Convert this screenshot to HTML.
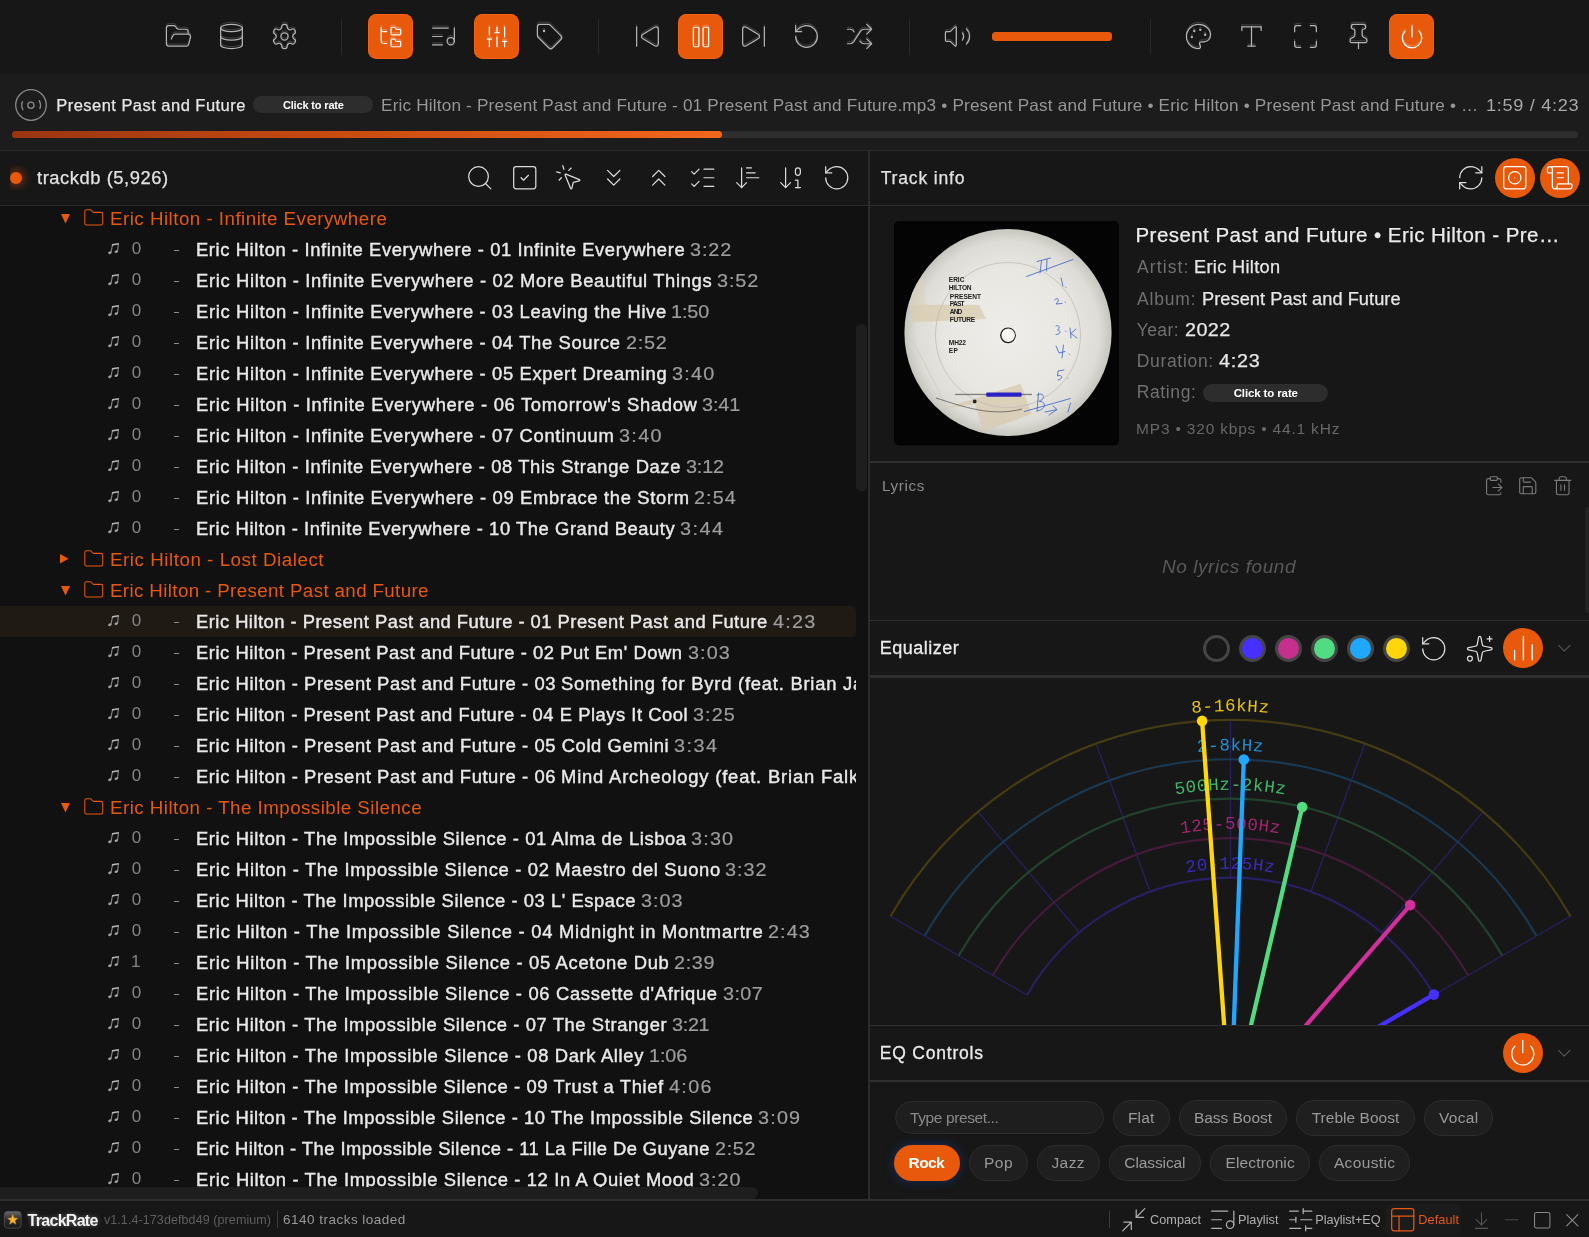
<!DOCTYPE html>
<html><head><meta charset="utf-8"><title>TrackRate</title>
<style>
html,body{margin:0;padding:0;background:#171717;}
body{width:1589px;height:1237px;position:relative;overflow:hidden;font-family:"Liberation Sans",sans-serif;}
.a,.t,.ic{position:absolute;}
.t{white-space:pre;}
.ic{display:block;overflow:visible;}
.btn{position:absolute;width:45px;height:45px;border-radius:8.5px;background:#e8590c;box-shadow:inset 0 0 0 1px rgba(255,104,20,.55);}
.sep{position:absolute;width:1px;background:#2a2a2a;}
.hl{position:absolute;background:#2b2b2b;height:1px;}
.pill{position:absolute;box-sizing:border-box;border:1px solid #2d2d2d;background:#1f1f1f;border-radius:18px;}
</style></head><body>
<div id="root" style="position:absolute;left:0;top:0;width:1589px;height:1237px;will-change:transform">
<svg width="0" height="0" style="position:absolute"><defs><filter id="gh" x="-20%" y="-20%" width="140%" height="140%"><feOffset in="SourceGraphic" dx="0" dy="-1.750" result="b"/><feComponentTransfer in="b" result="g"><feFuncA type="linear" slope=".22"/></feComponentTransfer><feMerge><feMergeNode in="g"/><feMergeNode in="SourceGraphic"/></feMerge></filter><g id="nt"><path d="M3 9.200L4.500 1.800M9.600 8.100L10.400 .6" fill="none" stroke="#878787" stroke-width="1.100"/><path d="M4 .95L10.950 0L10.750 1.600L3.800 2.700Z" fill="#b4b4b4"/><ellipse cx="1.900" cy="9.700" rx="1.850" ry="1.300" transform="rotate(-20 1.900 9.700)" fill="#a2a2a2"/><ellipse cx="8.300" cy="8.600" rx="1.850" ry="1.300" transform="rotate(-20 8.300 8.600)" fill="#a2a2a2"/></g></defs></svg>

<div class="a" style="left:0;top:0;width:1589px;height:74px;background:#171717"></div>
<svg class="ic" style="left:164.00px;top:22.30px;color:#b4b4b4" width="29" height="29" viewBox="0 0 24 24" fill="none" stroke="currentColor" stroke-width="1.0" stroke-linecap="round" stroke-linejoin="round" filter="url(#gh)"><path d="m6 14 1.5-2.9A2 2 0 0 1 9.24 10H20a2 2 0 0 1 1.94 2.5l-1.54 6a2 2 0 0 1-1.95 1.5H4a2 2 0 0 1-2-2V5a2 2 0 0 1 2-2h3.9a2 2 0 0 1 1.69.9l.81 1.2a2 2 0 0 0 1.67.9H18a2 2 0 0 1 2 2v2"/></svg>
<svg class="ic" style="left:217.00px;top:22.30px;color:#b4b4b4" width="29" height="29" viewBox="0 0 24 24" fill="none" stroke="currentColor" stroke-width="1.0" stroke-linecap="round" stroke-linejoin="round" filter="url(#gh)"><ellipse cx="12" cy="5" rx="9" ry="3"/><path d="M3 5V19A9 3 0 0 0 21 19V5"/><path d="M3 12A9 3 0 0 0 21 12"/></svg>
<svg class="ic" style="left:270.00px;top:22.30px;color:#b4b4b4" width="29" height="29" viewBox="0 0 24 24" fill="none" stroke="currentColor" stroke-width="1.0" stroke-linecap="round" stroke-linejoin="round" filter="url(#gh)"><path d="M12.22 2h-.44a2 2 0 0 0-2 2v.18a2 2 0 0 1-1 1.73l-.43.25a2 2 0 0 1-2 0l-.15-.08a2 2 0 0 0-2.73.73l-.22.38a2 2 0 0 0 .73 2.73l.15.1a2 2 0 0 1 1 1.72v.51a2 2 0 0 1-1 1.74l-.15.09a2 2 0 0 0-.73 2.73l.22.38a2 2 0 0 0 2.73.73l.15-.08a2 2 0 0 1 2 0l.43.25a2 2 0 0 1 1 1.73V20a2 2 0 0 0 2 2h.44a2 2 0 0 0 2-2v-.18a2 2 0 0 1 1-1.73l.43-.25a2 2 0 0 1 2 0l.15.08a2 2 0 0 0 2.73-.73l.22-.39a2 2 0 0 0-.73-2.73l-.15-.08a2 2 0 0 1-1-1.74v-.5a2 2 0 0 1 1-1.74l.15-.09a2 2 0 0 0 .73-2.73l-.22-.38a2 2 0 0 0-2.73-.73l-.15.08a2 2 0 0 1-2 0l-.43-.25a2 2 0 0 1-1-1.73V4a2 2 0 0 0-2-2z"/><circle cx="12" cy="12" r="3"/></svg>
<div class="btn" style="left:368px;top:14px"></div><svg class="ic" style="left:377.50px;top:23.80px;color:#ffffff" width="26" height="26" viewBox="0 0 24 24" fill="none" stroke="currentColor" stroke-width="1.15" stroke-linecap="round" stroke-linejoin="round" filter="url(#gh)"><path d="M20 10a1 1 0 0 0 1-1V6a1 1 0 0 0-1-1h-2.5a1 1 0 0 1-.8-.4l-.9-1.2A1 1 0 0 0 15 3h-2a1 1 0 0 0-1 1v5a1 1 0 0 0 1 1Z"/><path d="M20 21a1 1 0 0 0 1-1v-3a1 1 0 0 0-1-1h-2.9a1 1 0 0 1-.88-.55l-.42-.85a1 1 0 0 0-.92-.6H13a1 1 0 0 0-1 1v5a1 1 0 0 0 1 1Z"/><path d="M3 5a2 2 0 0 0 2 2h3"/><path d="M3 3v13a2 2 0 0 0 2 2h3"/></svg>
<svg class="ic" style="left:429.00px;top:22.30px;color:#b4b4b4" width="29" height="29" viewBox="0 0 24 24" fill="none" stroke="currentColor" stroke-width="1.0" stroke-linecap="round" stroke-linejoin="round" filter="url(#gh)"><path d="M16 5H3"/><path d="M11 12H3"/><path d="M11 19H3"/><path d="M21 16V5"/><circle cx="18" cy="16" r="3"/></svg>
<div class="btn" style="left:474px;top:14px"></div><svg class="ic" style="left:483.50px;top:23.80px;color:#ffffff" width="26" height="26" viewBox="0 0 24 24" fill="none" stroke="currentColor" stroke-width="1.15" stroke-linecap="round" stroke-linejoin="round" filter="url(#gh)"><path d="M10 8h4"/><path d="M12 21v-9"/><path d="M12 8V3"/><path d="M17 16h4"/><path d="M19 12V3"/><path d="M19 21v-5"/><path d="M3 14h4"/><path d="M5 10V3"/><path d="M5 21v-7"/></svg>
<svg class="ic" style="left:535.00px;top:22.30px;color:#b4b4b4" width="29" height="29" viewBox="0 0 24 24" fill="none" stroke="currentColor" stroke-width="1.0" stroke-linecap="round" stroke-linejoin="round" filter="url(#gh)"><path d="M12.586 2.586A2 2 0 0 0 11.172 2H4a2 2 0 0 0-2 2v7.172a2 2 0 0 0 .586 1.414l8.704 8.704a2.426 2.426 0 0 0 3.42 0l6.58-6.58a2.426 2.426 0 0 0 0-3.42z"/><circle cx="7.5" cy="7.5" r=".5" fill="currentColor"/></svg>
<svg class="ic" style="left:633.00px;top:22.30px;color:#b4b4b4" width="29" height="29" viewBox="0 0 24 24" fill="none" stroke="currentColor" stroke-width="1.0" stroke-linecap="round" stroke-linejoin="round" filter="url(#gh)"><path d="M17.971 4.285A2 2 0 0 1 21 6v12a2 2 0 0 1-3.029 1.715l-9.997-5.998a2 2 0 0 1-.003-3.432z"/><path d="M3 20V4"/></svg>
<div class="btn" style="left:678px;top:14px"></div><svg class="ic" style="left:687.50px;top:23.80px;color:#ffffff" width="26" height="26" viewBox="0 0 24 24" fill="none" stroke="currentColor" stroke-width="1.15" stroke-linecap="round" stroke-linejoin="round" filter="url(#gh)"><rect x="14" y="3" width="5" height="18" rx="1"/><rect x="5" y="3" width="5" height="18" rx="1"/></svg>
<svg class="ic" style="left:739.00px;top:22.30px;color:#b4b4b4" width="29" height="29" viewBox="0 0 24 24" fill="none" stroke="currentColor" stroke-width="1.0" stroke-linecap="round" stroke-linejoin="round" filter="url(#gh)"><path d="M21 4v16"/><path d="M6.029 4.285A2 2 0 0 0 3 6v12a2 2 0 0 0 3.029 1.715l9.997-5.998a2 2 0 0 0 .003-3.432z"/></svg>
<svg class="ic" style="left:792.00px;top:22.30px;color:#b4b4b4" width="29" height="29" viewBox="0 0 24 24" fill="none" stroke="currentColor" stroke-width="1.0" stroke-linecap="round" stroke-linejoin="round" filter="url(#gh)"><path d="M3 12a9 9 0 1 0 9-9 9.75 9.75 0 0 0-6.74 2.74L3 8"/><path d="M3 3v5h5"/></svg>
<svg class="ic" style="left:845.00px;top:22.30px;color:#b4b4b4" width="29" height="29" viewBox="0 0 24 24" fill="none" stroke="currentColor" stroke-width="1.0" stroke-linecap="round" stroke-linejoin="round" filter="url(#gh)"><path d="m18 14 4 4-4 4"/><path d="m18 2 4 4-4 4"/><path d="M2 18h1.973a4 4 0 0 0 3.3-1.7l5.454-8.6a4 4 0 0 1 3.3-1.7H22"/><path d="M2 6h1.972a4 4 0 0 1 3.6 2.2"/><path d="M22 18h-6.041a4 4 0 0 1-3.3-1.8l-.359-.45"/></svg>
<svg class="ic" style="left:943.00px;top:22.30px;color:#b4b4b4" width="29" height="29" viewBox="0 0 24 24" fill="none" stroke="currentColor" stroke-width="1.0" stroke-linecap="round" stroke-linejoin="round" filter="url(#gh)"><path d="M11 4.702a.705.705 0 0 0-1.203-.498L6.413 7.587A1.4 1.4 0 0 1 5.416 8H3a1 1 0 0 0-1 1v6a1 1 0 0 0 1 1h2.416a1.400 1.400 0 0 1 .997.413l3.383 3.384A.705.705 0 0 0 11 19.298z"/><path d="M16 9a5 5 0 0 1 0 6"/><path d="M19.364 18.364a9 9 0 0 0 0-12.728"/></svg>
<svg class="ic" style="left:1184.00px;top:22.30px;color:#b4b4b4" width="29" height="29" viewBox="0 0 24 24" fill="none" stroke="currentColor" stroke-width="1.0" stroke-linecap="round" stroke-linejoin="round" filter="url(#gh)"><circle cx="13.500" cy="6.500" r=".5" fill="currentColor"/><circle cx="17.500" cy="10.500" r=".5" fill="currentColor"/><circle cx="8.500" cy="7.500" r=".5" fill="currentColor"/><circle cx="6.500" cy="12.500" r=".5" fill="currentColor"/><path d="M12 2C6.500 2 2 6.500 2 12s4.500 10 10 10c.926 0 1.648-.746 1.648-1.688 0-.437-.18-.835-.437-1.125-.29-.289-.438-.652-.438-1.125a1.640 1.640 0 0 1 1.668-1.668h1.996c3.051 0 5.555-2.503 5.555-5.554C21.965 6.012 17.461 2 12 2z"/></svg>
<svg class="ic" style="left:1237.00px;top:22.30px;color:#b4b4b4" width="29" height="29" viewBox="0 0 24 24" fill="none" stroke="currentColor" stroke-width="1.0" stroke-linecap="round" stroke-linejoin="round" filter="url(#gh)"><polyline points="4 7 4 4 20 4 20 7"/><line x1="9" x2="15" y1="20" y2="20"/><line x1="12" x2="12" y1="4" y2="20"/></svg>
<svg class="ic" style="left:1291.00px;top:22.30px;color:#b4b4b4" width="29" height="29" viewBox="0 0 24 24" fill="none" stroke="currentColor" stroke-width="1.0" stroke-linecap="round" stroke-linejoin="round" filter="url(#gh)"><path d="M8 3H5a2 2 0 0 0-2 2v3"/><path d="M21 8V5a2 2 0 0 0-2-2h-3"/><path d="M3 16v3a2 2 0 0 0 2 2h3"/><path d="M16 21h3a2 2 0 0 0 2-2v-3"/></svg>
<svg class="ic" style="left:1343.50px;top:22.30px;color:#b4b4b4" width="29" height="29" viewBox="0 0 24 24" fill="none" stroke="currentColor" stroke-width="1.0" stroke-linecap="round" stroke-linejoin="round" filter="url(#gh)"><path d="M12 17v5"/><path d="M9 10.760a2 2 0 0 1-1.110 1.790l-1.780.9A2 2 0 0 0 5 15.240V16a1 1 0 0 0 1 1h12a1 1 0 0 0 1-1v-.76a2 2 0 0 0-1.110-1.790l-1.780-.9A2 2 0 0 1 15 10.760V7a1 1 0 0 1 1-1 2 2 0 0 0 0-4H8a2 2 0 0 0 0 4 1 1 0 0 1 1 1z"/></svg>
<div class="btn" style="left:1389px;top:14px"></div><svg class="ic" style="left:1398.50px;top:23.80px;color:#ffffff" width="26" height="26" viewBox="0 0 24 24" fill="none" stroke="currentColor" stroke-width="1.15" stroke-linecap="round" stroke-linejoin="round" filter="url(#gh)"><path d="M12 2v10"/><path d="M18.400 6.600a9 9 0 1 1-12.770.04"/></svg>
<div class="sep" style="left:341px;top:19px;height:36px"></div>
<div class="sep" style="left:598px;top:19px;height:36px"></div>
<div class="sep" style="left:909px;top:19px;height:36px"></div>
<div class="sep" style="left:1150px;top:19px;height:36px"></div>
<div class="a" style="left:992px;top:32px;width:120px;height:9px;border-radius:3.5px;background:#e8590c"></div>
<div class="a" style="left:0;top:74px;width:1589px;height:76px;background:#1c1c1c"></div>
<div class="hl" style="left:0;top:150px;width:1589px"></div>
<svg class="ic" style="left:10.7px;top:85px" width="40" height="40" viewBox="0 0 40 40" fill="none" stroke="#8a8a8a" stroke-width="1.3" stroke-linecap="round">
<circle cx="20" cy="20" r="15.300"/><circle cx="19.900" cy="20.200" r="3.100"/>
<path d="M11.900 24.700A9.400 9.400 0 0 1 11.400 16.600"/><path d="M28.300 15.600A9.400 9.400 0 0 1 28.900 23.500"/></svg>
<div class="t" style="left:56.20px;top:94.68px;font-size:16.5px;line-height:21px;color:#e6e6e6;letter-spacing:0.470px;-webkit-text-stroke:0.25px #e6e6e6;">Present Past and Future</div>
<div class="a" style="left:253px;top:96px;width:120px;height:17px;border-radius:9px;background:#2d2d2d"></div>
<div class="t" style="left:282.90px;top:97.79px;font-size:11px;line-height:14px;color:#ffffff;letter-spacing:-0.156px;font-weight:700;">Click to rate</div>
<div class="t" style="left:380.80px;top:94.68px;font-size:16.5px;line-height:21px;color:#979797;letter-spacing:0.173px;transform:scaleX(1.04);transform-origin:0 0;">Eric Hilton - Present Past and Future - 01 Present Past and Future.mp3 • Present Past and Future • Eric Hilton • Present Past and Future • …</div>
<div class="t" style="left:1486.30px;top:94.68px;font-size:16.5px;line-height:21px;color:#a8a8a8;letter-spacing:0.629px;transform:scaleX(1.1);transform-origin:0 0;">1:59 / 4:23</div>
<div class="a" style="left:12px;top:131px;width:1566px;height:7px;border-radius:3.5px;background:#2e2e2e"></div>
<div class="a" style="left:12px;top:131px;width:709.5px;height:7px;border-radius:3.5px;background:linear-gradient(90deg,#9a3512 0%,#c84a10 45%,#f2671c 100%)"></div>
<div class="a" style="left:0;top:151px;width:869px;height:54px;background:#171717"></div>
<div class="hl" style="left:0;top:205px;width:869px"></div>
<div class="a" style="left:0;top:206px;width:869px;height:994px;background:#111111"></div>
<div class="a" style="left:10px;top:166px;width:24px;height:24px;overflow:hidden"><div class="a" style="left:0;top:6px;width:12px;height:12px;border-radius:6px;background:#e8590c;box-shadow:0 0 9px 3px rgba(232,89,12,.38)"></div></div>
<div class="t" style="left:37.30px;top:167.14px;font-size:17.5px;line-height:23px;color:#e2e2e2;letter-spacing:0.511px;transform:scaleX(1.05);transform-origin:0 0;-webkit-text-stroke:0.25px #e2e2e2;">trackdb (5,926)</div>
<svg class="ic" style="left:465.25px;top:163.25px;color:#dcdcdc" width="29.5" height="29.5" viewBox="0 0 24 24" fill="none" stroke="currentColor" stroke-width="1.0" stroke-linecap="round" stroke-linejoin="round"><circle cx="11" cy="11" r="8"/><path d="m21 21-4.300-4.300"/></svg>
<svg class="ic" style="left:509.75px;top:163.25px;color:#dcdcdc" width="29.5" height="29.5" viewBox="0 0 24 24" fill="none" stroke="currentColor" stroke-width="1.0" stroke-linecap="round" stroke-linejoin="round"><rect width="18" height="18" x="3" y="3" rx="2"/><path d="m9 12 2 2 4-4"/></svg>
<svg class="ic" style="left:554.25px;top:163.25px;color:#dcdcdc" width="29.5" height="29.5" viewBox="0 0 24 24" fill="none" stroke="currentColor" stroke-width="1.0" stroke-linecap="round" stroke-linejoin="round"><path d="M14 4.100 12 6"/><path d="m5.100 8-2.900-.8"/><path d="m6 12-1.900 2"/><path d="M7.200 2.200 8 5.100"/><path d="M9.037 9.690a.498.498 0 0 1 .653-.653l11 4.500a.5.5 0 0 1-.074.949l-4.349 1.041a1 1 0 0 0-.740.739l-1.040 4.350a.5.5 0 0 1-.950.074z"/></svg>
<svg class="ic" style="left:598.75px;top:163.25px;color:#dcdcdc" width="29.5" height="29.5" viewBox="0 0 24 24" fill="none" stroke="currentColor" stroke-width="1.0" stroke-linecap="round" stroke-linejoin="round"><path d="m7 6 5 5 5-5"/><path d="m7 13 5 5 5-5"/></svg>
<svg class="ic" style="left:643.75px;top:163.25px;color:#dcdcdc" width="29.5" height="29.5" viewBox="0 0 24 24" fill="none" stroke="currentColor" stroke-width="1.0" stroke-linecap="round" stroke-linejoin="round"><path d="m17 11-5-5-5 5"/><path d="m17 18-5-5-5 5"/></svg>
<svg class="ic" style="left:688.25px;top:163.25px;color:#dcdcdc" width="29.5" height="29.5" viewBox="0 0 24 24" fill="none" stroke="currentColor" stroke-width="1.0" stroke-linecap="round" stroke-linejoin="round"><path d="M13 5h8"/><path d="M13 12h8"/><path d="M13 19h8"/><path d="m3 17 2 2 4-4"/><path d="m3 7 2 2 4-4"/></svg>
<svg class="ic" style="left:732.75px;top:163.25px;color:#dcdcdc" width="29.5" height="29.5" viewBox="0 0 24 24" fill="none" stroke="currentColor" stroke-width="1.0" stroke-linecap="round" stroke-linejoin="round"><path d="m3 16 4 4 4-4"/><path d="M7 20V4"/><path d="M11 4h4"/><path d="M11 8h7"/><path d="M11 12h10"/></svg>
<svg class="ic" style="left:777.25px;top:163.25px;color:#dcdcdc" width="29.5" height="29.5" viewBox="0 0 24 24" fill="none" stroke="currentColor" stroke-width="1.0" stroke-linecap="round" stroke-linejoin="round"><path d="m3 16 4 4 4-4"/><path d="M7 20V4"/><rect x="15" y="4" width="4" height="6" ry="2"/><path d="M17 20v-6h-2"/><path d="M15 20h4"/></svg>
<svg class="ic" style="left:821.75px;top:163.25px;color:#dcdcdc" width="29.5" height="29.5" viewBox="0 0 24 24" fill="none" stroke="currentColor" stroke-width="1.0" stroke-linecap="round" stroke-linejoin="round"><path d="M3 12a9 9 0 1 0 9-9 9.75 9.75 0 0 0-6.74 2.74L3 8"/><path d="M3 3v5h5"/></svg>
<div class="a" style="left:0;top:206px;width:856px;height:981px;overflow:hidden">
<div class="a" style="left:-8px;top:400.29999999999995px;width:864px;height:30.7px;border-radius:5.5px;background:#201a15"></div>
<svg class="ic" style="left:61.2px;top:7.70px" width="9" height="9.4" viewBox="0 0 9 9.4"><path d="M0 0H9L4.500 9.400Z" fill="#e8590c"/></svg>
<svg class="ic" style="left:82.75px;top:1.35px;color:#e8590c" width="21.5" height="21.5" viewBox="0 0 24 24" fill="none" stroke="currentColor" stroke-width="1.15" stroke-linecap="round" stroke-linejoin="round"><path d="M20 20a2 2 0 0 0 2-2V8a2 2 0 0 0-2-2h-7.900a2 2 0 0 1-1.690-.9L9.600 3.900A2 2 0 0 0 7.930 3H4a2 2 0 0 0-2 2v13a2 2 0 0 0 2 2Z"/></svg>
<div class="t" style="left:109.90px;top:1.86px;font-size:18px;line-height:23px;color:#e8590c;letter-spacing:0.471px;transform:scaleX(1.04);transform-origin:0 0;">Eric Hilton - Infinite Everywhere</div>
<svg class="ic" style="left:108.1px;top:36.80px" width="11.5" height="11.5" viewBox="0 0 11.5 11.5"><use href="#nt"/></svg>
<div class="t" style="left:131.80px;top:32.01px;font-size:17px;line-height:22px;color:#858585;letter-spacing:0.000px;">0</div>
<div class="a" style="left:173.9px;top:44.20px;width:5.2px;height:1.1px;background:#8a8a8a"></div>
<div class="t" style="left:195.90px;top:33.04px;font-size:17.5px;line-height:23px;color:#e9e9e9;letter-spacing:0.571px;transform:scaleX(1.05);transform-origin:0 0;-webkit-text-stroke:0.4px #e9e9e9;">Eric Hilton - Infinite Everywhere - 01 Infinite Everywhere</div>
<div class="t" style="left:689.80px;top:33.04px;font-size:17.5px;line-height:23px;color:#9d9d9d;letter-spacing:0.799px;transform:scaleX(1.13);transform-origin:0 0;-webkit-text-stroke:0.2px #9d9d9d;">3:22</div>
<svg class="ic" style="left:108.1px;top:67.80px" width="11.5" height="11.5" viewBox="0 0 11.5 11.5"><use href="#nt"/></svg>
<div class="t" style="left:131.80px;top:63.01px;font-size:17px;line-height:22px;color:#858585;letter-spacing:0.000px;">0</div>
<div class="a" style="left:173.9px;top:75.20px;width:5.2px;height:1.1px;background:#8a8a8a"></div>
<div class="t" style="left:195.90px;top:64.04px;font-size:17.5px;line-height:23px;color:#e9e9e9;letter-spacing:0.631px;transform:scaleX(1.05);transform-origin:0 0;-webkit-text-stroke:0.4px #e9e9e9;">Eric Hilton - Infinite Everywhere - 02 More Beautiful Things</div>
<div class="t" style="left:717.00px;top:64.04px;font-size:17.5px;line-height:23px;color:#9d9d9d;letter-spacing:0.829px;transform:scaleX(1.13);transform-origin:0 0;-webkit-text-stroke:0.2px #9d9d9d;">3:52</div>
<svg class="ic" style="left:108.1px;top:98.80px" width="11.5" height="11.5" viewBox="0 0 11.5 11.5"><use href="#nt"/></svg>
<div class="t" style="left:131.80px;top:94.01px;font-size:17px;line-height:22px;color:#858585;letter-spacing:0.000px;">0</div>
<div class="a" style="left:173.9px;top:106.20px;width:5.2px;height:1.1px;background:#8a8a8a"></div>
<div class="t" style="left:195.90px;top:95.04px;font-size:17.5px;line-height:23px;color:#e9e9e9;letter-spacing:0.619px;transform:scaleX(1.05);transform-origin:0 0;-webkit-text-stroke:0.4px #e9e9e9;">Eric Hilton - Infinite Everywhere - 03 Leaving the Hive</div>
<div class="t" style="left:671.00px;top:95.04px;font-size:17.5px;line-height:23px;color:#9d9d9d;letter-spacing:-0.086px;transform:scaleX(1.13);transform-origin:0 0;-webkit-text-stroke:0.2px #9d9d9d;">1:50</div>
<svg class="ic" style="left:108.1px;top:129.80px" width="11.5" height="11.5" viewBox="0 0 11.5 11.5"><use href="#nt"/></svg>
<div class="t" style="left:131.80px;top:125.01px;font-size:17px;line-height:22px;color:#858585;letter-spacing:0.000px;">0</div>
<div class="a" style="left:173.9px;top:137.20px;width:5.2px;height:1.1px;background:#8a8a8a"></div>
<div class="t" style="left:195.90px;top:126.04px;font-size:17.5px;line-height:23px;color:#e9e9e9;letter-spacing:0.618px;transform:scaleX(1.05);transform-origin:0 0;-webkit-text-stroke:0.4px #e9e9e9;">Eric Hilton - Infinite Everywhere - 04 The Source</div>
<div class="t" style="left:625.50px;top:126.04px;font-size:17.5px;line-height:23px;color:#9d9d9d;letter-spacing:0.652px;transform:scaleX(1.13);transform-origin:0 0;-webkit-text-stroke:0.2px #9d9d9d;">2:52</div>
<svg class="ic" style="left:108.1px;top:160.80px" width="11.5" height="11.5" viewBox="0 0 11.5 11.5"><use href="#nt"/></svg>
<div class="t" style="left:131.80px;top:156.01px;font-size:17px;line-height:22px;color:#858585;letter-spacing:0.000px;">0</div>
<div class="a" style="left:173.9px;top:168.20px;width:5.2px;height:1.1px;background:#8a8a8a"></div>
<div class="t" style="left:195.90px;top:157.04px;font-size:17.5px;line-height:23px;color:#e9e9e9;letter-spacing:0.621px;transform:scaleX(1.05);transform-origin:0 0;-webkit-text-stroke:0.4px #e9e9e9;">Eric Hilton - Infinite Everywhere - 05 Expert Dreaming</div>
<div class="t" style="left:672.00px;top:157.04px;font-size:17.5px;line-height:23px;color:#9d9d9d;letter-spacing:1.124px;transform:scaleX(1.13);transform-origin:0 0;-webkit-text-stroke:0.2px #9d9d9d;">3:40</div>
<svg class="ic" style="left:108.1px;top:191.80px" width="11.5" height="11.5" viewBox="0 0 11.5 11.5"><use href="#nt"/></svg>
<div class="t" style="left:131.80px;top:187.01px;font-size:17px;line-height:22px;color:#858585;letter-spacing:0.000px;">0</div>
<div class="a" style="left:173.9px;top:199.20px;width:5.2px;height:1.1px;background:#8a8a8a"></div>
<div class="t" style="left:195.90px;top:188.04px;font-size:17.5px;line-height:23px;color:#e9e9e9;letter-spacing:0.661px;transform:scaleX(1.05);transform-origin:0 0;-webkit-text-stroke:0.4px #e9e9e9;">Eric Hilton - Infinite Everywhere - 06 Tomorrow's Shadow</div>
<div class="t" style="left:702.30px;top:188.04px;font-size:17.5px;line-height:23px;color:#9d9d9d;letter-spacing:-0.086px;transform:scaleX(1.13);transform-origin:0 0;-webkit-text-stroke:0.2px #9d9d9d;">3:41</div>
<svg class="ic" style="left:108.1px;top:222.80px" width="11.5" height="11.5" viewBox="0 0 11.5 11.5"><use href="#nt"/></svg>
<div class="t" style="left:131.80px;top:218.01px;font-size:17px;line-height:22px;color:#858585;letter-spacing:0.000px;">0</div>
<div class="a" style="left:173.9px;top:230.20px;width:5.2px;height:1.1px;background:#8a8a8a"></div>
<div class="t" style="left:195.90px;top:219.04px;font-size:17.5px;line-height:23px;color:#e9e9e9;letter-spacing:0.621px;transform:scaleX(1.05);transform-origin:0 0;-webkit-text-stroke:0.4px #e9e9e9;">Eric Hilton - Infinite Everywhere - 07 Continuum</div>
<div class="t" style="left:619.10px;top:219.04px;font-size:17.5px;line-height:23px;color:#9d9d9d;letter-spacing:1.183px;transform:scaleX(1.13);transform-origin:0 0;-webkit-text-stroke:0.2px #9d9d9d;">3:40</div>
<svg class="ic" style="left:108.1px;top:253.80px" width="11.5" height="11.5" viewBox="0 0 11.5 11.5"><use href="#nt"/></svg>
<div class="t" style="left:131.80px;top:249.01px;font-size:17px;line-height:22px;color:#858585;letter-spacing:0.000px;">0</div>
<div class="a" style="left:173.9px;top:261.20px;width:5.2px;height:1.1px;background:#8a8a8a"></div>
<div class="t" style="left:195.90px;top:250.04px;font-size:17.5px;line-height:23px;color:#e9e9e9;letter-spacing:0.595px;transform:scaleX(1.05);transform-origin:0 0;-webkit-text-stroke:0.4px #e9e9e9;">Eric Hilton - Infinite Everywhere - 08 This Strange Daze</div>
<div class="t" style="left:685.90px;top:250.04px;font-size:17.5px;line-height:23px;color:#9d9d9d;letter-spacing:-0.115px;transform:scaleX(1.13);transform-origin:0 0;-webkit-text-stroke:0.2px #9d9d9d;">3:12</div>
<svg class="ic" style="left:108.1px;top:284.80px" width="11.5" height="11.5" viewBox="0 0 11.5 11.5"><use href="#nt"/></svg>
<div class="t" style="left:131.80px;top:280.01px;font-size:17px;line-height:22px;color:#858585;letter-spacing:0.000px;">0</div>
<div class="a" style="left:173.9px;top:292.20px;width:5.2px;height:1.1px;background:#8a8a8a"></div>
<div class="t" style="left:195.90px;top:281.04px;font-size:17.5px;line-height:23px;color:#e9e9e9;letter-spacing:0.632px;transform:scaleX(1.05);transform-origin:0 0;-webkit-text-stroke:0.4px #e9e9e9;">Eric Hilton - Infinite Everywhere - 09 Embrace the Storm</div>
<div class="t" style="left:694.20px;top:281.04px;font-size:17.5px;line-height:23px;color:#9d9d9d;letter-spacing:0.947px;transform:scaleX(1.13);transform-origin:0 0;-webkit-text-stroke:0.2px #9d9d9d;">2:54</div>
<svg class="ic" style="left:108.1px;top:315.80px" width="11.5" height="11.5" viewBox="0 0 11.5 11.5"><use href="#nt"/></svg>
<div class="t" style="left:131.80px;top:311.01px;font-size:17px;line-height:22px;color:#858585;letter-spacing:0.000px;">0</div>
<div class="a" style="left:173.9px;top:323.20px;width:5.2px;height:1.1px;background:#8a8a8a"></div>
<div class="t" style="left:195.90px;top:312.04px;font-size:17.5px;line-height:23px;color:#e9e9e9;letter-spacing:0.541px;transform:scaleX(1.05);transform-origin:0 0;-webkit-text-stroke:0.4px #e9e9e9;">Eric Hilton - Infinite Everywhere - 10 The Grand Beauty</div>
<div class="t" style="left:680.30px;top:312.04px;font-size:17.5px;line-height:23px;color:#9d9d9d;letter-spacing:1.360px;transform:scaleX(1.13);transform-origin:0 0;-webkit-text-stroke:0.2px #9d9d9d;">3:44</div>
<svg class="ic" style="left:60.4px;top:348.40px" width="8.6" height="9.600" viewBox="0 0 8.600 9.600"><path d="M0 0V9.600L8.600 4.800Z" fill="#e8590c"/></svg>
<svg class="ic" style="left:82.75px;top:342.35px;color:#e8590c" width="21.5" height="21.5" viewBox="0 0 24 24" fill="none" stroke="currentColor" stroke-width="1.15" stroke-linecap="round" stroke-linejoin="round"><path d="M20 20a2 2 0 0 0 2-2V8a2 2 0 0 0-2-2h-7.900a2 2 0 0 1-1.690-.9L9.600 3.900A2 2 0 0 0 7.930 3H4a2 2 0 0 0-2 2v13a2 2 0 0 0 2 2Z"/></svg>
<div class="t" style="left:109.90px;top:342.86px;font-size:18px;line-height:23px;color:#e8590c;letter-spacing:0.529px;transform:scaleX(1.04);transform-origin:0 0;">Eric Hilton - Lost Dialect</div>
<svg class="ic" style="left:61.2px;top:379.70px" width="9" height="9.4" viewBox="0 0 9 9.4"><path d="M0 0H9L4.500 9.400Z" fill="#e8590c"/></svg>
<svg class="ic" style="left:82.75px;top:373.35px;color:#e8590c" width="21.5" height="21.5" viewBox="0 0 24 24" fill="none" stroke="currentColor" stroke-width="1.15" stroke-linecap="round" stroke-linejoin="round"><path d="M20 20a2 2 0 0 0 2-2V8a2 2 0 0 0-2-2h-7.900a2 2 0 0 1-1.690-.9L9.600 3.900A2 2 0 0 0 7.930 3H4a2 2 0 0 0-2 2v13a2 2 0 0 0 2 2Z"/></svg>
<div class="t" style="left:109.90px;top:373.86px;font-size:18px;line-height:23px;color:#e8590c;letter-spacing:0.365px;transform:scaleX(1.04);transform-origin:0 0;">Eric Hilton - Present Past and Future</div>
<svg class="ic" style="left:108.1px;top:408.80px" width="11.5" height="11.5" viewBox="0 0 11.5 11.5"><use href="#nt"/></svg>
<div class="t" style="left:131.80px;top:404.01px;font-size:17px;line-height:22px;color:#858585;letter-spacing:0.000px;">0</div>
<div class="a" style="left:173.9px;top:416.20px;width:5.2px;height:1.1px;background:#8a8a8a"></div>
<div class="t" style="left:195.90px;top:405.04px;font-size:17.5px;line-height:23px;color:#e9e9e9;letter-spacing:0.453px;transform:scaleX(1.05);transform-origin:0 0;-webkit-text-stroke:0.4px #e9e9e9;">Eric Hilton - Present Past and Future - 01 Present Past and Future</div>
<div class="t" style="left:772.50px;top:405.04px;font-size:17.5px;line-height:23px;color:#9d9d9d;letter-spacing:1.124px;transform:scaleX(1.13);transform-origin:0 0;-webkit-text-stroke:0.2px #9d9d9d;">4:23</div>
<svg class="ic" style="left:108.1px;top:439.80px" width="11.5" height="11.5" viewBox="0 0 11.5 11.5"><use href="#nt"/></svg>
<div class="t" style="left:131.80px;top:435.01px;font-size:17px;line-height:22px;color:#858585;letter-spacing:0.000px;">0</div>
<div class="a" style="left:173.9px;top:447.20px;width:5.2px;height:1.1px;background:#8a8a8a"></div>
<div class="t" style="left:195.90px;top:436.04px;font-size:17.5px;line-height:23px;color:#e9e9e9;letter-spacing:0.512px;transform:scaleX(1.05);transform-origin:0 0;-webkit-text-stroke:0.4px #e9e9e9;">Eric Hilton - Present Past and Future - 02 Put Em' Down</div>
<div class="t" style="left:687.90px;top:436.04px;font-size:17.5px;line-height:23px;color:#9d9d9d;letter-spacing:0.947px;transform:scaleX(1.13);transform-origin:0 0;-webkit-text-stroke:0.2px #9d9d9d;">3:03</div>
<svg class="ic" style="left:108.1px;top:470.80px" width="11.5" height="11.5" viewBox="0 0 11.5 11.5"><use href="#nt"/></svg>
<div class="t" style="left:131.80px;top:466.01px;font-size:17px;line-height:22px;color:#858585;letter-spacing:0.000px;">0</div>
<div class="a" style="left:173.9px;top:478.20px;width:5.2px;height:1.1px;background:#8a8a8a"></div>
<div class="t" style="left:195.90px;top:467.04px;font-size:17.5px;line-height:23px;color:#e9e9e9;letter-spacing:0.544px;transform:scaleX(1.05);transform-origin:0 0;-webkit-text-stroke:0.4px #e9e9e9;">Eric Hilton - Present Past and Future - 03</div>
<div class="t" style="left:561.10px;top:467.04px;font-size:17.5px;line-height:23px;color:#e9e9e9;letter-spacing:0.733px;transform:scaleX(1.05);transform-origin:0 0;-webkit-text-stroke:0.4px #e9e9e9;">Something for Byrd (feat. Brian Jackson)</div>
<svg class="ic" style="left:108.1px;top:501.80px" width="11.5" height="11.5" viewBox="0 0 11.5 11.5"><use href="#nt"/></svg>
<div class="t" style="left:131.80px;top:497.01px;font-size:17px;line-height:22px;color:#858585;letter-spacing:0.000px;">0</div>
<div class="a" style="left:173.9px;top:509.20px;width:5.2px;height:1.1px;background:#8a8a8a"></div>
<div class="t" style="left:195.90px;top:498.04px;font-size:17.5px;line-height:23px;color:#e9e9e9;letter-spacing:0.501px;transform:scaleX(1.05);transform-origin:0 0;-webkit-text-stroke:0.4px #e9e9e9;">Eric Hilton - Present Past and Future - 04 E Plays It Cool</div>
<div class="t" style="left:692.80px;top:498.04px;font-size:17.5px;line-height:23px;color:#9d9d9d;letter-spacing:0.976px;transform:scaleX(1.13);transform-origin:0 0;-webkit-text-stroke:0.2px #9d9d9d;">3:25</div>
<svg class="ic" style="left:108.1px;top:532.80px" width="11.5" height="11.5" viewBox="0 0 11.5 11.5"><use href="#nt"/></svg>
<div class="t" style="left:131.80px;top:528.01px;font-size:17px;line-height:22px;color:#858585;letter-spacing:0.000px;">0</div>
<div class="a" style="left:173.9px;top:540.20px;width:5.2px;height:1.1px;background:#8a8a8a"></div>
<div class="t" style="left:195.90px;top:529.04px;font-size:17.5px;line-height:23px;color:#e9e9e9;letter-spacing:0.546px;transform:scaleX(1.05);transform-origin:0 0;-webkit-text-stroke:0.4px #e9e9e9;">Eric Hilton - Present Past and Future - 05 Cold Gemini</div>
<div class="t" style="left:673.60px;top:529.04px;font-size:17.5px;line-height:23px;color:#9d9d9d;letter-spacing:1.330px;transform:scaleX(1.13);transform-origin:0 0;-webkit-text-stroke:0.2px #9d9d9d;">3:34</div>
<svg class="ic" style="left:108.1px;top:563.80px" width="11.5" height="11.5" viewBox="0 0 11.5 11.5"><use href="#nt"/></svg>
<div class="t" style="left:131.80px;top:559.01px;font-size:17px;line-height:22px;color:#858585;letter-spacing:0.000px;">0</div>
<div class="a" style="left:173.9px;top:571.20px;width:5.2px;height:1.1px;background:#8a8a8a"></div>
<div class="t" style="left:195.90px;top:560.04px;font-size:17.5px;line-height:23px;color:#e9e9e9;letter-spacing:0.544px;transform:scaleX(1.05);transform-origin:0 0;-webkit-text-stroke:0.4px #e9e9e9;">Eric Hilton - Present Past and Future - 06</div>
<div class="t" style="left:561.10px;top:560.04px;font-size:17.5px;line-height:23px;color:#e9e9e9;letter-spacing:0.789px;transform:scaleX(1.05);transform-origin:0 0;-webkit-text-stroke:0.4px #e9e9e9;">Mind Archeology (feat. Brian Falkowski)</div>
<svg class="ic" style="left:61.2px;top:596.70px" width="9" height="9.4" viewBox="0 0 9 9.4"><path d="M0 0H9L4.500 9.400Z" fill="#e8590c"/></svg>
<svg class="ic" style="left:82.75px;top:590.35px;color:#e8590c" width="21.5" height="21.5" viewBox="0 0 24 24" fill="none" stroke="currentColor" stroke-width="1.15" stroke-linecap="round" stroke-linejoin="round"><path d="M20 20a2 2 0 0 0 2-2V8a2 2 0 0 0-2-2h-7.900a2 2 0 0 1-1.690-.9L9.600 3.900A2 2 0 0 0 7.930 3H4a2 2 0 0 0-2 2v13a2 2 0 0 0 2 2Z"/></svg>
<div class="t" style="left:109.90px;top:590.86px;font-size:18px;line-height:23px;color:#e8590c;letter-spacing:0.452px;transform:scaleX(1.04);transform-origin:0 0;">Eric Hilton - The Impossible Silence</div>
<svg class="ic" style="left:108.1px;top:625.80px" width="11.5" height="11.5" viewBox="0 0 11.5 11.5"><use href="#nt"/></svg>
<div class="t" style="left:131.80px;top:621.01px;font-size:17px;line-height:22px;color:#858585;letter-spacing:0.000px;">0</div>
<div class="a" style="left:173.9px;top:633.20px;width:5.2px;height:1.1px;background:#8a8a8a"></div>
<div class="t" style="left:195.90px;top:622.04px;font-size:17.5px;line-height:23px;color:#e9e9e9;letter-spacing:0.568px;transform:scaleX(1.05);transform-origin:0 0;-webkit-text-stroke:0.4px #e9e9e9;">Eric Hilton - The Impossible Silence - 01 Alma de Lisboa</div>
<div class="t" style="left:690.80px;top:622.04px;font-size:17.5px;line-height:23px;color:#9d9d9d;letter-spacing:1.065px;transform:scaleX(1.13);transform-origin:0 0;-webkit-text-stroke:0.2px #9d9d9d;">3:30</div>
<svg class="ic" style="left:108.1px;top:656.80px" width="11.5" height="11.5" viewBox="0 0 11.5 11.5"><use href="#nt"/></svg>
<div class="t" style="left:131.80px;top:652.01px;font-size:17px;line-height:22px;color:#858585;letter-spacing:0.000px;">0</div>
<div class="a" style="left:173.9px;top:664.20px;width:5.2px;height:1.1px;background:#8a8a8a"></div>
<div class="t" style="left:195.90px;top:653.04px;font-size:17.5px;line-height:23px;color:#e9e9e9;letter-spacing:0.629px;transform:scaleX(1.05);transform-origin:0 0;-webkit-text-stroke:0.4px #e9e9e9;">Eric Hilton - The Impossible Silence - 02 Maestro del Suono</div>
<div class="t" style="left:725.10px;top:653.04px;font-size:17.5px;line-height:23px;color:#9d9d9d;letter-spacing:0.888px;transform:scaleX(1.13);transform-origin:0 0;-webkit-text-stroke:0.2px #9d9d9d;">3:32</div>
<svg class="ic" style="left:108.1px;top:687.80px" width="11.5" height="11.5" viewBox="0 0 11.5 11.5"><use href="#nt"/></svg>
<div class="t" style="left:131.80px;top:683.01px;font-size:17px;line-height:22px;color:#858585;letter-spacing:0.000px;">0</div>
<div class="a" style="left:173.9px;top:695.20px;width:5.2px;height:1.1px;background:#8a8a8a"></div>
<div class="t" style="left:195.90px;top:684.04px;font-size:17.5px;line-height:23px;color:#e9e9e9;letter-spacing:0.530px;transform:scaleX(1.05);transform-origin:0 0;-webkit-text-stroke:0.4px #e9e9e9;">Eric Hilton - The Impossible Silence - 03 L' Espace</div>
<div class="t" style="left:640.90px;top:684.04px;font-size:17.5px;line-height:23px;color:#9d9d9d;letter-spacing:0.888px;transform:scaleX(1.13);transform-origin:0 0;-webkit-text-stroke:0.2px #9d9d9d;">3:03</div>
<svg class="ic" style="left:108.1px;top:718.80px" width="11.5" height="11.5" viewBox="0 0 11.5 11.5"><use href="#nt"/></svg>
<div class="t" style="left:131.80px;top:714.01px;font-size:17px;line-height:22px;color:#858585;letter-spacing:0.000px;">0</div>
<div class="a" style="left:173.9px;top:726.20px;width:5.2px;height:1.1px;background:#8a8a8a"></div>
<div class="t" style="left:195.90px;top:715.04px;font-size:17.5px;line-height:23px;color:#e9e9e9;letter-spacing:0.714px;transform:scaleX(1.05);transform-origin:0 0;-webkit-text-stroke:0.4px #e9e9e9;">Eric Hilton - The Impossible Silence - 04 Midnight in Montmartre</div>
<div class="t" style="left:768.10px;top:715.04px;font-size:17.5px;line-height:23px;color:#9d9d9d;letter-spacing:0.947px;transform:scaleX(1.13);transform-origin:0 0;-webkit-text-stroke:0.2px #9d9d9d;">2:43</div>
<svg class="ic" style="left:108.1px;top:749.80px" width="11.5" height="11.5" viewBox="0 0 11.5 11.5"><use href="#nt"/></svg>
<div class="t" style="left:130.90px;top:745.01px;font-size:17px;line-height:22px;color:#858585;letter-spacing:0.000px;">1</div>
<div class="a" style="left:173.9px;top:757.20px;width:5.2px;height:1.1px;background:#8a8a8a"></div>
<div class="t" style="left:195.90px;top:746.04px;font-size:17.5px;line-height:23px;color:#e9e9e9;letter-spacing:0.659px;transform:scaleX(1.05);transform-origin:0 0;-webkit-text-stroke:0.4px #e9e9e9;">Eric Hilton - The Impossible Silence - 05 Acetone Dub</div>
<div class="t" style="left:674.00px;top:746.04px;font-size:17.5px;line-height:23px;color:#9d9d9d;letter-spacing:0.593px;transform:scaleX(1.13);transform-origin:0 0;-webkit-text-stroke:0.2px #9d9d9d;">2:39</div>
<svg class="ic" style="left:108.1px;top:780.80px" width="11.5" height="11.5" viewBox="0 0 11.5 11.5"><use href="#nt"/></svg>
<div class="t" style="left:131.80px;top:776.01px;font-size:17px;line-height:22px;color:#858585;letter-spacing:0.000px;">0</div>
<div class="a" style="left:173.9px;top:788.20px;width:5.2px;height:1.1px;background:#8a8a8a"></div>
<div class="t" style="left:195.90px;top:777.04px;font-size:17.5px;line-height:23px;color:#e9e9e9;letter-spacing:0.645px;transform:scaleX(1.05);transform-origin:0 0;-webkit-text-stroke:0.4px #e9e9e9;">Eric Hilton - The Impossible Silence - 06 Cassette d'Afrique</div>
<div class="t" style="left:722.50px;top:777.04px;font-size:17.5px;line-height:23px;color:#9d9d9d;letter-spacing:0.386px;transform:scaleX(1.13);transform-origin:0 0;-webkit-text-stroke:0.2px #9d9d9d;">3:07</div>
<svg class="ic" style="left:108.1px;top:811.80px" width="11.5" height="11.5" viewBox="0 0 11.5 11.5"><use href="#nt"/></svg>
<div class="t" style="left:131.80px;top:807.01px;font-size:17px;line-height:22px;color:#858585;letter-spacing:0.000px;">0</div>
<div class="a" style="left:173.9px;top:819.20px;width:5.2px;height:1.1px;background:#8a8a8a"></div>
<div class="t" style="left:195.90px;top:808.04px;font-size:17.5px;line-height:23px;color:#e9e9e9;letter-spacing:0.577px;transform:scaleX(1.05);transform-origin:0 0;-webkit-text-stroke:0.4px #e9e9e9;">Eric Hilton - The Impossible Silence - 07 The Stranger</div>
<div class="t" style="left:672.00px;top:808.04px;font-size:17.5px;line-height:23px;color:#9d9d9d;letter-spacing:-0.263px;transform:scaleX(1.13);transform-origin:0 0;-webkit-text-stroke:0.2px #9d9d9d;">3:21</div>
<svg class="ic" style="left:108.1px;top:842.80px" width="11.5" height="11.5" viewBox="0 0 11.5 11.5"><use href="#nt"/></svg>
<div class="t" style="left:131.80px;top:838.01px;font-size:17px;line-height:22px;color:#858585;letter-spacing:0.000px;">0</div>
<div class="a" style="left:173.9px;top:850.20px;width:5.2px;height:1.1px;background:#8a8a8a"></div>
<div class="t" style="left:195.90px;top:839.04px;font-size:17.5px;line-height:23px;color:#e9e9e9;letter-spacing:0.618px;transform:scaleX(1.05);transform-origin:0 0;-webkit-text-stroke:0.4px #e9e9e9;">Eric Hilton - The Impossible Silence - 08 Dark Alley</div>
<div class="t" style="left:648.60px;top:839.04px;font-size:17.5px;line-height:23px;color:#9d9d9d;letter-spacing:-0.086px;transform:scaleX(1.13);transform-origin:0 0;-webkit-text-stroke:0.2px #9d9d9d;">1:06</div>
<svg class="ic" style="left:108.1px;top:873.80px" width="11.5" height="11.5" viewBox="0 0 11.5 11.5"><use href="#nt"/></svg>
<div class="t" style="left:131.80px;top:869.01px;font-size:17px;line-height:22px;color:#858585;letter-spacing:0.000px;">0</div>
<div class="a" style="left:173.9px;top:881.20px;width:5.2px;height:1.1px;background:#8a8a8a"></div>
<div class="t" style="left:195.90px;top:870.04px;font-size:17.5px;line-height:23px;color:#e9e9e9;letter-spacing:0.597px;transform:scaleX(1.05);transform-origin:0 0;-webkit-text-stroke:0.4px #e9e9e9;">Eric Hilton - The Impossible Silence - 09 Trust a Thief</div>
<div class="t" style="left:668.60px;top:870.04px;font-size:17.5px;line-height:23px;color:#9d9d9d;letter-spacing:1.212px;transform:scaleX(1.13);transform-origin:0 0;-webkit-text-stroke:0.2px #9d9d9d;">4:06</div>
<svg class="ic" style="left:108.1px;top:904.80px" width="11.5" height="11.5" viewBox="0 0 11.5 11.5"><use href="#nt"/></svg>
<div class="t" style="left:131.80px;top:900.01px;font-size:17px;line-height:22px;color:#858585;letter-spacing:0.000px;">0</div>
<div class="a" style="left:173.9px;top:912.20px;width:5.2px;height:1.1px;background:#8a8a8a"></div>
<div class="t" style="left:195.90px;top:901.04px;font-size:17.5px;line-height:23px;color:#e9e9e9;letter-spacing:0.538px;transform:scaleX(1.05);transform-origin:0 0;-webkit-text-stroke:0.4px #e9e9e9;">Eric Hilton - The Impossible Silence - 10 The Impossible Silence</div>
<div class="t" style="left:758.20px;top:901.04px;font-size:17.5px;line-height:23px;color:#9d9d9d;letter-spacing:1.065px;transform:scaleX(1.13);transform-origin:0 0;-webkit-text-stroke:0.2px #9d9d9d;">3:09</div>
<svg class="ic" style="left:108.1px;top:935.80px" width="11.5" height="11.5" viewBox="0 0 11.5 11.5"><use href="#nt"/></svg>
<div class="t" style="left:131.80px;top:931.01px;font-size:17px;line-height:22px;color:#858585;letter-spacing:0.000px;">0</div>
<div class="a" style="left:173.9px;top:943.20px;width:5.2px;height:1.1px;background:#8a8a8a"></div>
<div class="t" style="left:195.90px;top:932.04px;font-size:17.5px;line-height:23px;color:#e9e9e9;letter-spacing:0.418px;transform:scaleX(1.05);transform-origin:0 0;-webkit-text-stroke:0.4px #e9e9e9;">Eric Hilton - The Impossible Silence - 11 La Fille De Guyane</div>
<div class="t" style="left:714.60px;top:932.04px;font-size:17.5px;line-height:23px;color:#9d9d9d;letter-spacing:0.593px;transform:scaleX(1.13);transform-origin:0 0;-webkit-text-stroke:0.2px #9d9d9d;">2:52</div>
<svg class="ic" style="left:108.1px;top:966.80px" width="11.5" height="11.5" viewBox="0 0 11.5 11.5"><use href="#nt"/></svg>
<div class="t" style="left:131.80px;top:962.01px;font-size:17px;line-height:22px;color:#858585;letter-spacing:0.000px;">0</div>
<div class="a" style="left:173.9px;top:974.20px;width:5.2px;height:1.1px;background:#8a8a8a"></div>
<div class="t" style="left:195.90px;top:963.04px;font-size:17.5px;line-height:23px;color:#e9e9e9;letter-spacing:0.603px;transform:scaleX(1.05);transform-origin:0 0;-webkit-text-stroke:0.4px #e9e9e9;">Eric Hilton - The Impossible Silence - 12 In A Quiet Mood</div>
<div class="t" style="left:699.00px;top:963.04px;font-size:17.5px;line-height:23px;color:#9d9d9d;letter-spacing:0.888px;transform:scaleX(1.13);transform-origin:0 0;-webkit-text-stroke:0.2px #9d9d9d;">3:20</div>
</div>
<div class="a" style="left:856px;top:324px;width:11px;height:167px;border-radius:6px;background:#1e1e1e"></div>
<div class="a" style="left:-8px;top:1187px;width:766px;height:11.5px;border-radius:6px;background:#1e1e1e"></div>
<div class="a" style="left:868px;top:151px;width:2px;height:1049px;background:#2b2b2b"></div>
<div class="a" style="left:870px;top:151px;width:719px;height:1049px;background:#171717"></div>
<div class="t" style="left:880.70px;top:167.44px;font-size:17.5px;line-height:23px;color:#e2e2e2;letter-spacing:0.835px;-webkit-text-stroke:0.25px #e2e2e2;">Track info</div>
<svg class="ic" style="left:1456.25px;top:163.25px;color:#dcdcdc" width="29.5" height="29.5" viewBox="0 0 24 24" fill="none" stroke="currentColor" stroke-width="1.0" stroke-linecap="round" stroke-linejoin="round"><path d="M3 12a9 9 0 0 1 9-9 9.750 9.750 0 0 1 6.740 2.740L21 8"/><path d="M21 3v5h-5"/><path d="M21 12a9 9 0 0 1-9 9 9.750 9.750 0 0 1-6.740-2.740L3 16"/><path d="M8 16H3v5"/></svg>
<div class="a" style="left:1495px;top:158px;width:40px;height:40px;border-radius:20px;background:#e8590c"></div>
<svg class="ic" style="left:1500.25px;top:163.25px;color:#ffffff" width="29.5" height="29.5" viewBox="0 0 24 24" fill="none" stroke="currentColor" stroke-width="1.0" stroke-linecap="round" stroke-linejoin="round"><rect width="18" height="18" x="3" y="3" rx="2"/><circle cx="12" cy="12" r="5"/><path d="M12 12h.01"/></svg>
<div class="a" style="left:1540px;top:158px;width:40px;height:40px;border-radius:20px;background:#e8590c"></div>
<svg class="ic" style="left:1545.25px;top:163.25px;color:#ffffff" width="29.5" height="29.5" viewBox="0 0 24 24" fill="none" stroke="currentColor" stroke-width="1.0" stroke-linecap="round" stroke-linejoin="round"><path d="M15 12h-5"/><path d="M15 8h-5"/><path d="M19 17V5a2 2 0 0 0-2-2H4"/><path d="M8 21h12a2 2 0 0 0 2-2v-1a1 1 0 0 0-1-1H11a1 1 0 0 0-1 1v1a2 2 0 1 1-4 0V5a2 2 0 1 0-4 0v2a1 1 0 0 0 1 1h3"/></svg>
<div class="hl" style="left:870px;top:205px;width:720px"></div>
<svg class="ic" style="left:894px;top:221px" width="225" height="224.500" viewBox="0 0 225 224.500">
<defs>
<radialGradient id="dg" cx="50%" cy="50%" r="50%"><stop offset="0" stop-color="#eeede9"/><stop offset="0.6" stop-color="#e8e7e2"/><stop offset="0.88" stop-color="#dddcd6"/><stop offset="1" stop-color="#c6c5be"/></radialGradient>
<clipPath id="dc"><circle cx="114" cy="111.500" r="103.600"/></clipPath>
</defs>
<rect width="225" height="224.500" rx="5" fill="#040404"/>
<circle cx="114" cy="111.500" r="103.600" fill="url(#dg)"/>
<g clip-path="url(#dc)">
<path d="M15.400 83.600L85.100 84L92.200 98.100L18.400 101.200Z" fill="#d9cbae" opacity=".75"/>
<path d="M21 58L30 58L31 84L15 84Z" fill="#ddd3bd" opacity=".6"/>
<path d="M47.700 188L126.600 162.800L137.700 193.100L89.200 210.300L81 183Z" fill="#d8cab0" opacity=".8"/>
<path d="M18 118L60 200" stroke="#c9c6bc" stroke-width=".6" fill="none"/>
</g>
<circle cx="114" cy="114" r="72.500" fill="none" stroke="#b9b7b0" stroke-width=".7"/>
<circle cx="114" cy="111.500" r="96" fill="none" stroke="#d6d4cc" stroke-width=".5"/>
<path d="M42 177C70 186 98 196 128 188" stroke="#4a4a48" stroke-width=".7" fill="none"/>
<circle cx="114" cy="114.300" r="7.900" fill="#1a1a18"/><circle cx="114.200" cy="114.200" r="6.700" fill="#f4f4ee"/><circle cx="112.800" cy="113" r="4.500" fill="#ffffff" opacity=".7"/>
<g font-family="Liberation Sans,sans-serif" font-weight="700" font-size="6.600" fill="#1c1c1c" lengthAdjust="spacingAndGlyphs">
<text x="54.800" y="61.300" textLength="15.600">ERIC</text><text x="54.800" y="68.500" textLength="22.800">HILTON</text>
<text x="55.800" y="78.200" textLength="31.300">PRESENT</text><text x="55.800" y="85.400" textLength="14.800">PAST</text><text x="55.800" y="92.700" textLength="12.500">AND</text><text x="55.800" y="100.700" textLength="25.300">FUTURE</text>
<text x="54.800" y="124.400" textLength="17.200">MH22</text><text x="54.800" y="131.700" textLength="9.100">EP</text>
</g>
<rect x="61" y="172.800" width="77" height="1.300" fill="#2a2a2a" opacity=".55"/>
<rect x="92.200" y="171.600" width="35.400" height="4.200" rx="1" fill="#2a22c4"/>
<circle cx="80.700" cy="180.400" r="1.900" fill="#222"/>
<g stroke="#4a6fc8" stroke-width=".9" fill="none" stroke-linecap="round" stroke-linejoin="round">
<path d="M132.500 55.500L179 38.500"/><path d="M143 40.500L156.500 37"/><path d="M147.500 40L146 52"/><path d="M153 38.500L152.500 50"/>
<path d="M167 57L169 65M171.500 66L172 66.500"/>
<path d="M160.500 79C163 76 167 78 162 83L168 82.500M171 81L171.500 81.500"/>
<path d="M162 105C166 103 166 108 163.500 109C167 109 167 114 162 113.500M171.500 110L172 110.500M176 107L177 117M182 108L177 112.500L183 117"/>
<path d="M162 125L165 132L171 130.500M169.500 124L168 137M175 133L175.500 133.500"/>
<path d="M170 149L164 150L163.500 155C168 153 170 158 164 159M173.500 157L174 157.500"/>
<path d="M144.500 172L143 190M143 174C150 170 152 178 145 180.500C153 180 152 189 143 190"/>
<path d="M130.500 190.500L176.500 177.500"/><path d="M151 191L163 188.500L155 194M163 188.500L159 185"/><path d="M176.500 182L174 191"/>
</g>
</svg>
<div class="t" style="left:1135.50px;top:220.90px;font-size:20.5px;line-height:27px;color:#ececec;letter-spacing:0.444px;-webkit-text-stroke:0.25px #ececec;">Present Past and Future • Eric Hilton - Pre…</div>
<div class="t" style="left:1137.10px;top:255.54px;font-size:17.5px;line-height:23px;color:#707070;letter-spacing:1.078px;">Artist:</div>
<div class="t" style="left:1194.30px;top:255.54px;font-size:17.5px;line-height:23px;color:#e6e6e6;letter-spacing:0.304px;transform:scaleX(1.04);transform-origin:0 0;-webkit-text-stroke:0.25px #e6e6e6;">Eric Hilton</div>
<div class="t" style="left:1137.10px;top:287.84px;font-size:17.5px;line-height:23px;color:#707070;letter-spacing:0.786px;">Album:</div>
<div class="t" style="left:1201.60px;top:287.84px;font-size:17.5px;line-height:23px;color:#e6e6e6;letter-spacing:0.057px;transform:scaleX(1.04);transform-origin:0 0;-webkit-text-stroke:0.25px #e6e6e6;">Present Past and Future</div>
<div class="t" style="left:1136.70px;top:318.54px;font-size:17.5px;line-height:23px;color:#707070;letter-spacing:0.416px;">Year:</div>
<div class="t" style="left:1185.00px;top:318.54px;font-size:17.5px;line-height:23px;color:#e6e6e6;letter-spacing:0.354px;transform:scaleX(1.13);transform-origin:0 0;-webkit-text-stroke:0.25px #e6e6e6;">2022</div>
<div class="t" style="left:1136.70px;top:349.74px;font-size:17.5px;line-height:23px;color:#707070;letter-spacing:0.686px;">Duration:</div>
<div class="t" style="left:1219.40px;top:349.74px;font-size:17.5px;line-height:23px;color:#e6e6e6;letter-spacing:0.681px;transform:scaleX(1.13);transform-origin:0 0;-webkit-text-stroke:0.25px #e6e6e6;">4:23</div>
<div class="t" style="left:1136.70px;top:381.34px;font-size:17.5px;line-height:23px;color:#707070;letter-spacing:0.641px;">Rating:</div>
<div class="a" style="left:1203px;top:384px;width:125px;height:18px;border-radius:9px;background:#2d2d2d"></div>
<div class="t" style="left:1233.70px;top:385.72px;font-size:11.5px;line-height:15px;color:#ffffff;letter-spacing:-0.127px;font-weight:700;">Click to rate</div>
<div class="t" style="left:1136.10px;top:418.53px;font-size:15.5px;line-height:20px;color:#676767;letter-spacing:0.803px;">MP3 • 320 kbps • 44.1 kHz</div>
<div class="a" style="left:870px;top:461px;width:720px;height:2px;background:#303030"></div>
<div class="t" style="left:882.00px;top:475.83px;font-size:15.2px;line-height:20px;color:#8c8c8c;letter-spacing:0.658px;">Lyrics</div>
<svg class="ic" style="left:1482.65px;top:474.75px;color:#7a7a7a" width="21.5" height="21.5" viewBox="0 0 24 24" fill="none" stroke="currentColor" stroke-width="1.25" stroke-linecap="round" stroke-linejoin="round"><path d="M15 2H9a1 1 0 0 0-1 1v2c0 .6.400 1 1 1h6c.6 0 1-.4 1-1V3c0-.6-.4-1-1-1Z"/><path d="M8 4H6a2 2 0 0 0-2 2v14a2 2 0 0 0 2 2h12a2 2 0 0 0 2-2M16 4h2a2 2 0 0 1 2 2v2M11 14h10"/><path d="m17 10 4 4-4 4"/></svg>
<svg class="ic" style="left:1516.65px;top:474.75px;color:#7a7a7a" width="21.5" height="21.5" viewBox="0 0 24 24" fill="none" stroke="currentColor" stroke-width="1.25" stroke-linecap="round" stroke-linejoin="round"><path d="M15.200 3a2 2 0 0 1 1.400.6l3.800 3.800a2 2 0 0 1 .6 1.400V19a2 2 0 0 1-2 2H5a2 2 0 0 1-2-2V5a2 2 0 0 1 2-2z"/><path d="M17 21v-7a1 1 0 0 0-1-1H8a1 1 0 0 0-1 1v7"/><path d="M7 3v4a1 1 0 0 0 1 1h7"/></svg>
<svg class="ic" style="left:1551.65px;top:474.75px;color:#7a7a7a" width="21.5" height="21.5" viewBox="0 0 24 24" fill="none" stroke="currentColor" stroke-width="1.25" stroke-linecap="round" stroke-linejoin="round"><path d="M3 6h18"/><path d="M19 6v14c0 1-1 2-2 2H7c-1 0-2-1-2-2V6"/><path d="M8 6V4c0-1 1-2 2-2h4c1 0 2 1 2 2v2"/><line x1="10" x2="10" y1="11" y2="17"/><line x1="14" x2="14" y1="11" y2="17"/></svg>
<div class="t" style="left:1162.00px;top:553.52px;font-size:19px;line-height:25px;color:#595959;letter-spacing:0.559px;font-style:italic;">No lyrics found</div>
<div class="a" style="left:1585px;top:506.500px;width:6px;height:106px;border-radius:3px;background:#222222"></div>
<div class="hl" style="left:870px;top:620px;width:720px;background:#2e2e2e"></div>
<div class="t" style="left:879.80px;top:636.76px;font-size:18px;line-height:23px;color:#ebebeb;letter-spacing:0.482px;-webkit-text-stroke:0.3px #ebebeb;">Equalizer</div>
<div class="a" style="left:1203.1px;top:634.8px;width:27px;height:27px;box-sizing:border-box;border-radius:14px;border:3px solid #454545;background:#171717"></div>
<div class="a" style="left:1239.1px;top:634.8px;width:27px;height:27px;box-sizing:border-box;border-radius:14px;border:3px solid #454545;background:#4530ff"></div>
<div class="a" style="left:1275.1px;top:634.8px;width:27px;height:27px;box-sizing:border-box;border-radius:14px;border:3px solid #454545;background:#c62f8b"></div>
<div class="a" style="left:1311.1px;top:634.8px;width:27px;height:27px;box-sizing:border-box;border-radius:14px;border:3px solid #454545;background:#52dc82"></div>
<div class="a" style="left:1347.1px;top:634.8px;width:27px;height:27px;box-sizing:border-box;border-radius:14px;border:3px solid #454545;background:#20a8ff"></div>
<div class="a" style="left:1383.1px;top:634.8px;width:27px;height:27px;box-sizing:border-box;border-radius:14px;border:3px solid #454545;background:#ffd60a"></div>
<svg class="ic" style="left:1419.25px;top:633.55px;color:#e0e0e0" width="29.5" height="29.5" viewBox="0 0 24 24" fill="none" stroke="currentColor" stroke-width="1.0" stroke-linecap="round" stroke-linejoin="round"><path d="M3 12a9 9 0 1 0 9-9 9.75 9.75 0 0 0-6.74 2.74L3 8"/><path d="M3 3v5h5"/></svg>
<svg class="ic" style="left:1464.55px;top:633.55px;color:#e0e0e0" width="29.5" height="29.5" viewBox="0 0 24 24" fill="none" stroke="currentColor" stroke-width="1.0" stroke-linecap="round" stroke-linejoin="round"><path d="M11.017 2.814a1 1 0 0 1 1.966 0l1.051 5.558a2 2 0 0 0 1.594 1.594l5.558 1.051a1 1 0 0 1 0 1.966l-5.558 1.051a2 2 0 0 0-1.594 1.594l-1.051 5.558a1 1 0 0 1-1.966 0l-1.051-5.558a2 2 0 0 0-1.594-1.594l-5.558-1.051a1 1 0 0 1 0-1.966l5.558-1.051a2 2 0 0 0 1.594-1.594z"/><path d="M20 2v4"/><path d="M22 4h-4"/><circle cx="4" cy="20" r="2"/></svg>
<div class="a" style="left:1503px;top:628.3px;width:40px;height:40px;border-radius:20px;background:#e8590c"></div>
<svg class="ic" style="left:1503px;top:628.3px" width="40" height="40" viewBox="0 0 40 40" stroke="#ffffff" stroke-width="1.35" stroke-linecap="round"><path d="M11.600 31.700V22.500M20.400 31.700V8.300M29.200 31.700V16.900"/></svg>
<svg class="ic" style="left:1552.95px;top:637.05px;color:#555555" width="22.5" height="22.5" viewBox="0 0 24 24" fill="none" stroke="currentColor" stroke-width="1.3" stroke-linecap="round" stroke-linejoin="round"><path d="m6 9 6 6 6-6"/></svg>
<div class="a" style="left:870px;top:675px;width:720px;height:3px;background:#2e2e2e"></div>
<svg class="ic" style="left:870px;top:678px;overflow:hidden" width="719" height="347" viewBox="0 0 719 347" fill="none"><path d="M157.0 317.0L20.5 238.2" stroke="#282062" stroke-width="1.300"/><path d="M209.4 254.5L108.1 133.8" stroke="#282062" stroke-width="1.300"/><path d="M280.1 213.7L226.2 65.6" stroke="#282062" stroke-width="1.300"/><path d="M360.5 199.5L360.5 41.9" stroke="#282062" stroke-width="1.300"/><path d="M440.9 213.7L494.8 65.6" stroke="#282062" stroke-width="1.300"/><path d="M511.6 254.5L612.9 133.8" stroke="#282062" stroke-width="1.300"/><path d="M564.0 317.0L700.5 238.2" stroke="#282062" stroke-width="1.300"/><path d="M157.0 317.0A235 235 0 0 1 564.0 317.0" stroke="#272062" stroke-width="2.200"/><path d="M122.9 297.3A274.4 274.4 0 0 1 598.1 297.3" stroke="#451b3a" stroke-width="2.200"/><path d="M88.7 277.6A313.8 313.8 0 0 1 632.3 277.6" stroke="#23422d" stroke-width="2.200"/><path d="M54.6 257.9A353.2 353.2 0 0 1 666.4 257.9" stroke="#1a3850" stroke-width="2.200"/><path d="M20.5 238.2A392.6 392.6 0 0 1 700.5 238.2" stroke="#453b12" stroke-width="2.200"/><path id="lp0" d="M238.6 223.4A243.8 243.8 0 0 1 482.4 223.4"/><text font-family="Liberation Mono,monospace" font-size="17.500" letter-spacing=".55" fill="#3a2bbd" text-anchor="middle"><textPath href="#lp0" startOffset="50%">20-125Hz</textPath></text><path id="lp1" d="M218.9 189.2A283.2 283.2 0 0 1 502.1 189.2"/><text font-family="Liberation Mono,monospace" font-size="17.500" letter-spacing=".55" fill="#a3266f" text-anchor="middle"><textPath href="#lp1" startOffset="50%">125-500Hz</textPath></text><path id="lp2" d="M199.2 155.1A322.6 322.6 0 0 1 521.8 155.1"/><text font-family="Liberation Mono,monospace" font-size="17.500" letter-spacing=".55" fill="#3fb86a" text-anchor="middle"><textPath href="#lp2" startOffset="50%">500Hz-2kHz</textPath></text><path id="lp3" d="M179.5 121.0A362.0 362.0 0 0 1 541.5 121.0"/><text font-family="Liberation Mono,monospace" font-size="17.500" letter-spacing=".55" fill="#1f8fd6" text-anchor="middle"><textPath href="#lp3" startOffset="50%">2-8kHz</textPath></text><path id="lp4" d="M159.8 86.9A401.40000000000003 401.40000000000003 0 0 1 561.2 86.9"/><text font-family="Liberation Mono,monospace" font-size="17.500" letter-spacing=".55" fill="#e9c40e" text-anchor="middle"><textPath href="#lp4" startOffset="50%">8-16kHz</textPath></text><path d="M360.5 434.5L563.8 316.6" stroke="#4530ff" stroke-width="4.300" stroke-linecap="round"/><circle cx="563.8" cy="316.6" r="5.300" fill="#4530ff"/><path d="M360.5 434.5L540.2 227.1" stroke="#d0309a" stroke-width="4.300" stroke-linecap="round"/><circle cx="540.2" cy="227.1" r="5.300" fill="#d0309a"/><path d="M360.5 434.5L432.2 129.0" stroke="#52dc82" stroke-width="4.300" stroke-linecap="round"/><circle cx="432.2" cy="129.0" r="5.300" fill="#52dc82"/><path d="M360.5 434.5L373.8 81.6" stroke="#20a8ff" stroke-width="4.300" stroke-linecap="round"/><circle cx="373.8" cy="81.6" r="5.300" fill="#20a8ff"/><path d="M360.5 434.5L332.1 42.9" stroke="#ffd60a" stroke-width="4.300" stroke-linecap="round"/><circle cx="332.1" cy="42.9" r="5.300" fill="#ffd60a"/></svg>
<div class="hl" style="left:870px;top:1025px;width:720px;background:#2e2e2e"></div>
<div class="t" style="left:879.80px;top:1042.44px;font-size:17.5px;line-height:23px;color:#ebebeb;letter-spacing:0.789px;-webkit-text-stroke:0.3px #ebebeb;">EQ Controls</div>
<div class="a" style="left:1502.700px;top:1033px;width:40px;height:40px;border-radius:20px;background:#e8590c"></div>
<svg class="ic" style="left:1507.95px;top:1038.25px;color:#ffffff" width="29.5" height="29.5" viewBox="0 0 24 24" fill="none" stroke="currentColor" stroke-width="1.0" stroke-linecap="round" stroke-linejoin="round"><path d="M12 2v10"/><path d="M18.400 6.600a9 9 0 1 1-12.770.04"/></svg>
<svg class="ic" style="left:1552.95px;top:1041.75px;color:#555555" width="22.5" height="22.5" viewBox="0 0 24 24" fill="none" stroke="currentColor" stroke-width="1.3" stroke-linecap="round" stroke-linejoin="round"><path d="m6 9 6 6 6-6"/></svg>
<div class="a" style="left:870px;top:1080px;width:720px;height:2px;background:#303030"></div>
<div class="pill" style="left:894.5px;top:1101px;width:209.5px;height:33px;background:#1e1e1e;border-color:#2c2c2c"></div>
<div class="t" style="left:910.00px;top:1107.83px;font-size:15.5px;line-height:20px;color:#8a8a8a;letter-spacing:-0.394px;">Type preset...</div>
<div class="pill" style="left:1113px;top:1100px;width:57px;height:36px"></div>
<div class="t" style="left:1128.00px;top:1107.83px;font-size:15.5px;line-height:20px;color:#9a9a9a;letter-spacing:0.119px;">Flat</div>
<div class="pill" style="left:1179.3px;top:1100px;width:107.60000000000014px;height:36px"></div>
<div class="t" style="left:1193.90px;top:1107.83px;font-size:15.5px;line-height:20px;color:#9a9a9a;letter-spacing:-0.034px;">Bass Boost</div>
<div class="pill" style="left:1295.9px;top:1100px;width:119.0px;height:36px"></div>
<div class="t" style="left:1311.70px;top:1107.83px;font-size:15.5px;line-height:20px;color:#9a9a9a;letter-spacing:0.026px;">Treble Boost</div>
<div class="pill" style="left:1423.9px;top:1100px;width:69.09999999999991px;height:36px"></div>
<div class="t" style="left:1439.00px;top:1107.83px;font-size:15.5px;line-height:20px;color:#9a9a9a;letter-spacing:0.320px;">Vocal</div>
<div class="a" style="left:894px;top:1145px;width:66.20000000000005px;height:36px;border-radius:18px;background:#e8590c;box-shadow:0 0 9px 2px rgba(24,44,92,.75)"></div>
<div class="t" style="left:908.60px;top:1152.83px;font-size:15.5px;line-height:20px;color:#ffffff;letter-spacing:-0.635px;font-weight:700;">Rock</div>
<div class="pill" style="left:969px;top:1145px;width:58.90000000000009px;height:36px"></div>
<div class="t" style="left:984.00px;top:1152.63px;font-size:15.5px;line-height:20px;color:#9a9a9a;letter-spacing:0.503px;">Pop</div>
<div class="pill" style="left:1037.2px;top:1145px;width:62.799999999999955px;height:36px"></div>
<div class="t" style="left:1051.40px;top:1152.63px;font-size:15.5px;line-height:20px;color:#9a9a9a;letter-spacing:0.442px;">Jazz</div>
<div class="pill" style="left:1109px;top:1145px;width:91.79999999999995px;height:36px"></div>
<div class="t" style="left:1124.30px;top:1152.63px;font-size:15.5px;line-height:20px;color:#9a9a9a;letter-spacing:-0.102px;">Classical</div>
<div class="pill" style="left:1210.3px;top:1145px;width:99.70000000000005px;height:36px"></div>
<div class="t" style="left:1225.60px;top:1152.63px;font-size:15.5px;line-height:20px;color:#9a9a9a;letter-spacing:0.115px;">Electronic</div>
<div class="pill" style="left:1319.3px;top:1145px;width:90.60000000000014px;height:36px"></div>
<div class="t" style="left:1333.90px;top:1152.63px;font-size:15.5px;line-height:20px;color:#9a9a9a;letter-spacing:0.358px;">Acoustic</div>
<div class="a" style="left:0;top:1199px;width:1589px;height:2px;background:#2e2e2e"></div>
<div class="a" style="left:0;top:1201px;width:1589px;height:36px;background:#171717"></div>
<svg class="ic" style="left:3.8px;top:1211.2px" width="17.5" height="17.5" viewBox="0 0 17.5 17.5"><defs><linearGradient id="ag" x1="0" y1="0" x2="0" y2="1"><stop offset="0" stop-color="#6a6a6a"/><stop offset="0.45" stop-color="#2e2e2e"/><stop offset="1" stop-color="#161616"/></linearGradient></defs>
<rect x=".4" y=".4" width="16.700" height="16.700" rx="3.200" fill="url(#ag)" stroke="#555" stroke-width=".8"/>
<path d="M8.75 3.4L10.15 6.95L13.95 7.2L11 9.6L11.95 13.3L8.75 11.250L5.550 13.300L6.500 9.600L3.550 7.200L7.350 6.950Z" fill="#f4b52a" stroke="#c8861a" stroke-width=".5"/></svg>
<div class="t" style="left:27.60px;top:1209.56px;font-size:16px;line-height:21px;color:#f2f2f2;letter-spacing:-0.713px;font-weight:700;text-shadow:0 0 4px rgba(255,255,255,.35);">TrackRate</div>
<div class="t" style="left:103.90px;top:1212.07px;font-size:12.5px;line-height:16px;color:#5e5e5e;letter-spacing:0.093px;">v1.1.4-173defbd49 (premium)</div>
<div class="a" style="left:276.600px;top:1211px;width:1.200px;height:17px;background:#3a3a3a"></div>
<div class="t" style="left:283.00px;top:1210.92px;font-size:13.5px;line-height:18px;color:#9a9a9a;letter-spacing:0.484px;">6140 tracks loaded</div>
<div class="a" style="left:1109px;top:1211px;width:1.200px;height:16.500px;background:#3a3a3a"></div>
<svg class="ic" style="left:1119.25px;top:1205.45px;color:#b0b0b0" width="29.5" height="29.5" viewBox="0 0 24 24" fill="none" stroke="currentColor" stroke-width="1.0" stroke-linecap="round" stroke-linejoin="round"><polyline points="4 14 10 14 10 20"/><polyline points="20 10 14 10 14 4"/><line x1="14" x2="21" y1="10" y2="3"/><line x1="3" x2="10" y1="21" y2="14"/></svg>
<div class="t" style="left:1150.10px;top:1211.90px;font-size:12.7px;line-height:17px;color:#b0b0b0;letter-spacing:0.020px;">Compact</div>
<svg class="ic" style="left:1207.75px;top:1205.45px;color:#b0b0b0" width="29.5" height="29.5" viewBox="0 0 24 24" fill="none" stroke="currentColor" stroke-width="1.0" stroke-linecap="round" stroke-linejoin="round"><path d="M16 5H3"/><path d="M11 12H3"/><path d="M11 19H3"/><path d="M21 16V5"/><circle cx="18" cy="16" r="3"/></svg>
<div class="t" style="left:1237.90px;top:1211.90px;font-size:12.7px;line-height:17px;color:#b0b0b0;letter-spacing:0.059px;">Playlist</div>
<svg class="ic" style="left:1285.75px;top:1205.45px;color:#b0b0b0" width="29.5" height="29.5" viewBox="0 0 24 24" fill="none" stroke="currentColor" stroke-width="1.0" stroke-linecap="round" stroke-linejoin="round"><path d="M10 5H3"/><path d="M12 19H3"/><path d="M14 3v4"/><path d="M16 17v4"/><path d="M21 12h-9"/><path d="M21 19h-5"/><path d="M21 5h-7"/><path d="M8 10v4"/><path d="M8 12H3"/></svg>
<div class="t" style="left:1315.30px;top:1211.90px;font-size:12.7px;line-height:17px;color:#b0b0b0;letter-spacing:-0.064px;">Playlist+EQ</div>
<div class="a" style="left:1385px;top:1204px;width:75.500px;height:32px;border-radius:5px;background:#1b1b1b"></div>
<svg class="ic" style="left:1388.25px;top:1205.45px;color:#e8590c" width="29.5" height="29.5" viewBox="0 0 24 24" fill="none" stroke="currentColor" stroke-width="1.0" stroke-linecap="round" stroke-linejoin="round"><rect width="18" height="18" x="3" y="3" rx="2"/><path d="M3 9h18"/><path d="M9 21V9"/></svg>
<div class="t" style="left:1418.30px;top:1211.90px;font-size:12.7px;line-height:17px;color:#e8590c;letter-spacing:0.083px;">Default</div>
<svg class="ic" style="left:1470.50px;top:1209.70px;color:#555555" width="21" height="21" viewBox="0 0 24 24" fill="none" stroke="currentColor" stroke-width="1.2" stroke-linecap="round" stroke-linejoin="round"><path d="M12 17V3"/><path d="m6 11 6 6 6-6"/><path d="M19 21H5"/></svg>
<svg class="ic" style="left:1500.75px;top:1208.95px;color:#4a4a4a" width="21.5" height="21.5" viewBox="0 0 24 24" fill="none" stroke="currentColor" stroke-width="1.2" stroke-linecap="round" stroke-linejoin="round"><path d="M5 12h14"/></svg>
<svg class="ic" style="left:1531.95px;top:1209.95px;color:#8a8a8a" width="20.5" height="20.5" viewBox="0 0 24 24" fill="none" stroke="currentColor" stroke-width="1.2" stroke-linecap="round" stroke-linejoin="round"><rect width="18" height="18" x="3" y="3" rx="2"/></svg>
<svg class="ic" style="left:1560.85px;top:1208.55px;color:#8a8a8a" width="22.5" height="22.5" viewBox="0 0 24 24" fill="none" stroke="currentColor" stroke-width="1.2" stroke-linecap="round" stroke-linejoin="round"><path d="M18 6 6 18"/><path d="m6 6 12 12"/></svg>
</div></body></html>
